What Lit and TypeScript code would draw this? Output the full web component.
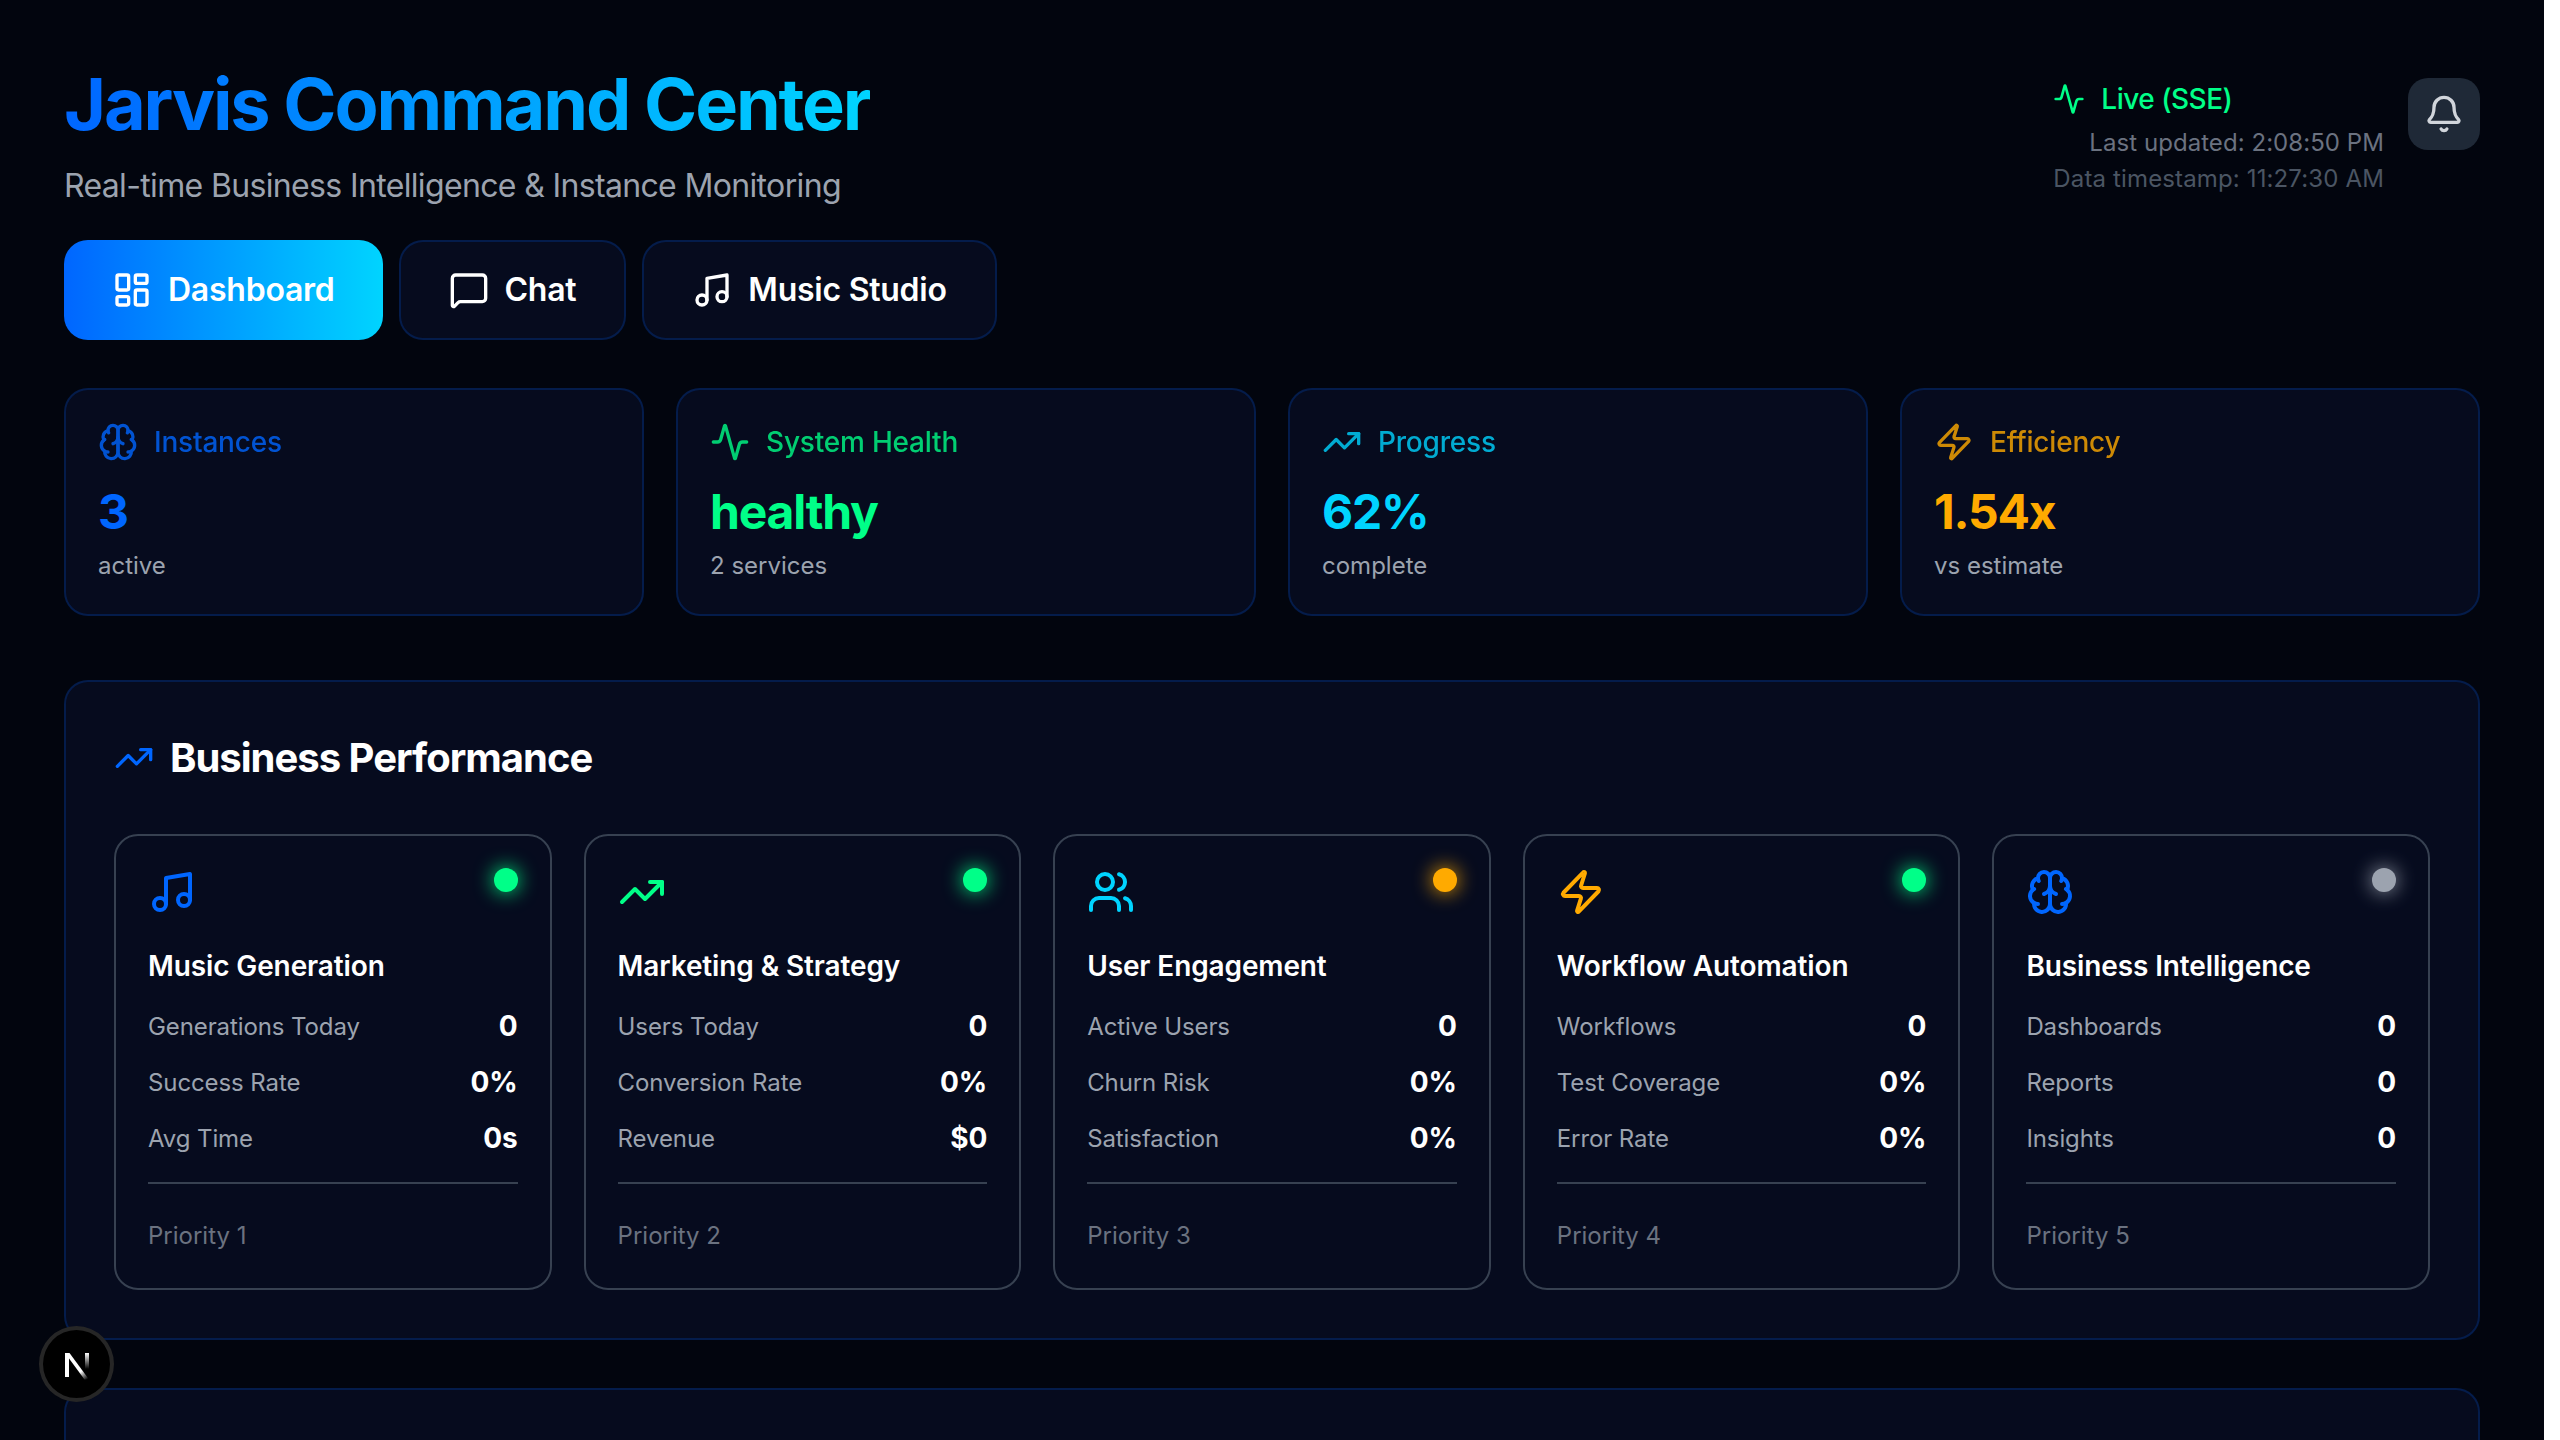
import { LitElement, html, css, svg } from 'lit';
import { customElement } from 'lit/decorators.js';

// Lucide icon bodies, all on a 24x24 grid
const icons = {
  activity: svg`<path d="M22 12h-2.48a2 2 0 0 0-1.93 1.46l-2.35 8.36a.25.25 0 0 1-.48 0L9.24 2.18a.25.25 0 0 0-.48 0l-2.35 8.36A2 2 0 0 1 4.49 12H2"/>`,
  bell: svg`<path d="M10.268 21a2 2 0 0 0 3.464 0"/><path d="M3.262 15.326A1 1 0 0 0 4 17h16a1 1 0 0 0 .74-1.673C19.41 13.956 18 12.499 18 8A6 6 0 0 0 6 8c0 4.499-1.411 5.956-2.738 7.326"/>`,
  dashboard: svg`<rect width="7" height="9" x="3" y="3" rx="1"/><rect width="7" height="5" x="14" y="3" rx="1"/><rect width="7" height="9" x="14" y="12" rx="1"/><rect width="7" height="5" x="3" y="16" rx="1"/>`,
  chat: svg`<path d="M22 17a2 2 0 0 1-2 2H6.828a2 2 0 0 0-1.414.586l-2.202 2.202A.71.71 0 0 1 2 21.286V5a2 2 0 0 1 2-2h16a2 2 0 0 1 2 2z"/>`,
  music: svg`<path d="M9 18V5l12-2v13"/><circle cx="6" cy="18" r="3"/><circle cx="18" cy="16" r="3"/>`,
  trending: svg`<path d="M16 7h6v6"/><path d="m22 7-8.5 8.5-5-5L2 17"/>`,
  users: svg`<path d="M16 21v-2a4 4 0 0 0-4-4H6a4 4 0 0 0-4 4v2"/><circle cx="9" cy="7" r="4"/><path d="M22 21v-2a4 4 0 0 0-3-3.87"/><path d="M16 3.13a4 4 0 0 1 0 7.75"/>`,
  zap: svg`<path d="M4 14a1 1 0 0 1-.78-1.63l9.9-10.2a.5.5 0 0 1 .86.46l-1.92 6.02A1 1 0 0 0 13 10h7a1 1 0 0 1 .78 1.63l-9.9 10.2a.5.5 0 0 1-.86-.46l1.92-6.02A1 1 0 0 0 11 14z"/>`,
  brain: svg`<path d="M12 5a3 3 0 1 0-5.997.125 4 4 0 0 0-2.526 5.77 4 4 0 0 0 .556 6.588A4 4 0 1 0 12 18Z"/><path d="M12 5a3 3 0 1 1 5.997.125 4 4 0 0 1 2.526 5.77 4 4 0 0 1-.556 6.588A4 4 0 1 1 12 18Z"/><path d="M15 13a4.5 4.5 0 0 1-3-4 4.5 4.5 0 0 1-3 4"/><path d="M17.599 6.5a3 3 0 0 0 .399-1.375"/><path d="M6.003 5.125A3 3 0 0 0 6.401 6.5"/><path d="M3.477 10.896a4 4 0 0 1 .585-.396"/><path d="M19.938 10.5a4 4 0 0 1 .585.396"/><path d="M6 18a4 4 0 0 1-1.967-.516"/><path d="M19.967 17.484A4 4 0 0 1 18 18"/>`,
};

type IconName = keyof typeof icons;
type Tone = 'blue' | 'green' | 'cyan' | 'amber' | 'grey';

const icon = (name: IconName, cls = '') => html`
  <svg class="icon ${cls}" viewBox="0 0 24 24" fill="none" stroke="currentColor" stroke-width="2"
    stroke-linecap="round" stroke-linejoin="round">${icons[name]}</svg>
`;

const tabs: { label: string; icon: IconName; active?: boolean }[] = [
  { label: 'Dashboard', icon: 'dashboard', active: true },
  { label: 'Chat', icon: 'chat' },
  { label: 'Music Studio', icon: 'music' },
];

const stats: { title: string; icon: IconName; tone: Tone; value: string; sub: string }[] = [
  { title: 'Instances', icon: 'brain', tone: 'blue', value: '3', sub: 'active' },
  { title: 'System Health', icon: 'activity', tone: 'green', value: 'healthy', sub: '2 services' },
  { title: 'Progress', icon: 'trending', tone: 'cyan', value: '62%', sub: 'complete' },
  { title: 'Efficiency', icon: 'zap', tone: 'amber', value: '1.54x', sub: 'vs estimate' },
];

const units: { title: string; icon: IconName; tone: Tone; dot: Tone; priority: number; rows: [string, string][] }[] = [
  { title: 'Music Generation', icon: 'music', tone: 'blue', dot: 'green', priority: 1,
    rows: [['Generations Today', '0'], ['Success Rate', '0%'], ['Avg Time', '0s']] },
  { title: 'Marketing & Strategy', icon: 'trending', tone: 'green', dot: 'green', priority: 2,
    rows: [['Users Today', '0'], ['Conversion Rate', '0%'], ['Revenue', '$0']] },
  { title: 'User Engagement', icon: 'users', tone: 'cyan', dot: 'amber', priority: 3,
    rows: [['Active Users', '0'], ['Churn Risk', '0%'], ['Satisfaction', '0%']] },
  { title: 'Workflow Automation', icon: 'zap', tone: 'amber', dot: 'green', priority: 4,
    rows: [['Workflows', '0'], ['Test Coverage', '0%'], ['Error Rate', '0%']] },
  { title: 'Business Intelligence', icon: 'brain', tone: 'blue', dot: 'grey', priority: 5,
    rows: [['Dashboards', '0'], ['Reports', '0'], ['Insights', '0']] },
];

@customElement('app-root')
export class AppRoot extends LitElement {
  static styles = css`
    :host {
      display: block;
      position: relative;
      width: 2544px;
      height: 1440px;
      overflow: hidden;
      background: #02050e;
      color: #fff;
      font-family: 'Inter', 'Liberation Sans', sans-serif;
    }

    .page {
      padding: 64px;
    }

    .blue { --tone: #0066ff; }
    .green { --tone: #00ff88; }
    .cyan { --tone: #00d4ff; }
    .amber { --tone: #ffaa00; }
    .grey { --tone: #9ca3af; }

    .icon {
      display: block;
      flex: none;
      width: 40px;
      height: 40px;
    }

    /* header */
    .header {
      display: flex;
      justify-content: space-between;
      align-items: flex-start;
      margin-bottom: 30px;
    }

    h1 {
      margin: 0 0 18px;
      width: fit-content;
      font-size: 72px;
      line-height: 80px;
      font-weight: 700;
      letter-spacing: -2.15px;
      background: linear-gradient(90deg, #0066ff, #00d4ff);
      -webkit-background-clip: text;
      background-clip: text;
      color: transparent;
    }

    .subtitle {
      font-size: 32px;
      line-height: 48px;
      letter-spacing: -0.65px;
      color: #9ca3af;
    }

    .header-right {
      display: flex;
      align-items: flex-start;
      gap: 24px;
      padding-top: 14px;
    }

    .status {
      display: flex;
      flex-direction: column;
      text-align: right;
      padding-top: 1px;
    }

    .live {
      display: flex;
      align-items: center;
      gap: 16px;
      margin-bottom: 6px;
      font-size: 28px;
      line-height: 40px;
      font-weight: 500;
      letter-spacing: -0.5px;
      color: #00ff88;
    }

    .live .icon {
      width: 32px;
      height: 32px;
    }

    .updated,
    .stamp {
      font-size: 24px;
      line-height: 36px;
    }

    .updated { color: #6b7280; letter-spacing: 0.06px; }
    .stamp { color: #4b5563; letter-spacing: 0.14px; }

    .bell {
      display: flex;
      align-items: center;
      justify-content: center;
      width: 72px;
      height: 72px;
      border-radius: 20px;
      background: #1f2937;
      color: #d1d5db;
    }

    /* tabs */
    .tabs {
      display: flex;
      gap: 16px;
      margin-bottom: 48px;
    }

    .tab {
      display: flex;
      align-items: center;
      gap: 16px;
      padding: 24px 48px;
      border: 2px solid rgba(0, 102, 255, 0.2);
      border-radius: 24px;
      background: #060b1e;
      font-size: 32px;
      line-height: 48px;
      font-weight: 600;
      letter-spacing: -0.25px;
    }

    .tab.active {
      border: 0;
      background: linear-gradient(90deg, #0066ff, #00d4ff);
    }

    /* top stats */
    .stats {
      display: grid;
      grid-template-columns: repeat(4, 1fr);
      gap: 32px;
      margin-bottom: 64px;
    }

    .panel {
      border: 2px solid rgba(0, 102, 255, 0.2);
      border-radius: 24px;
      background: #060b1e;
    }

    .stat {
      padding: 32px;
    }

    .stat-title {
      display: flex;
      align-items: center;
      gap: 16px;
      height: 40px;
      margin-bottom: 18px;
      font-size: 28px;
      font-weight: 500;
      letter-spacing: -0.2px;
      color: var(--tone);
    }

    .stat-title > * {
      opacity: 0.8;
    }

    .stat-value {
      font-size: 48px;
      line-height: 64px;
      font-weight: 700;
      letter-spacing: -1.2px;
      color: var(--tone);
    }

    .stat-sub {
      margin-top: 6px;
      font-size: 24px;
      line-height: 32px;
      color: #9ca3af;
    }

    /* business performance */
    .section {
      padding: 48px;
      margin-bottom: 48px;
    }

    .section.next {
      height: 300px;
    }

    h2 {
      display: flex;
      align-items: center;
      gap: 16px;
      margin: 0 0 48px;
      font-size: 40px;
      line-height: 56px;
      font-weight: 700;
      letter-spacing: -1px;
    }

    h2 .icon {
      color: #0066ff;
    }

    .units {
      display: grid;
      grid-template-columns: repeat(5, 1fr);
      gap: 32px;
    }

    .unit {
      padding: 32px;
      border: 2px solid #374151;
      border-radius: 24px;
    }

    .unit-top {
      display: flex;
      justify-content: space-between;
      align-items: flex-start;
      margin-bottom: 26px;
    }

    .unit-top .icon {
      width: 48px;
      height: 48px;
      color: var(--tone);
    }

    .dot {
      width: 24px;
      height: 24px;
      border-radius: 50%;
      background: var(--tone);
      box-shadow: 0 0 20px var(--tone);
    }

    h3 {
      margin: 0 0 16px;
      font-size: 28px;
      line-height: 48px;
      font-weight: 600;
      letter-spacing: -0.12px;
    }

    .rows {
      display: flex;
      flex-direction: column;
      gap: 16px;
    }

    .row {
      display: flex;
      justify-content: space-between;
      align-items: center;
      height: 40px;
      font-size: 24px;
      letter-spacing: -0.1px;
      color: #9ca3af;
    }

    .row b {
      font-size: 28px;
      font-weight: 700;
      color: #fff;
    }

    .priority {
      margin-top: 24px;
      padding-top: 32px;
      border-top: 2px solid #374151;
      font-size: 24px;
      line-height: 40px;
      color: #6b7280;
    }

    /* dev tools badge */
    .badge {
      position: absolute;
      left: 39px;
      top: 1326px;
      display: flex;
      align-items: center;
      justify-content: center;
      box-sizing: border-box;
      width: 75px;
      height: 76px;
      border: 4px solid #262626;
      border-radius: 50%;
      background: #000;
    }
  `;

  render() {
    return html`
      <div class="page">
        <header class="header">
          <div>
            <h1>Jarvis Command Center</h1>
            <div class="subtitle">Real-time Business Intelligence &amp; Instance Monitoring</div>
          </div>
          <div class="header-right">
            <div class="status">
              <div class="live">${icon('activity')}<span>Live (SSE)</span></div>
              <div class="updated">Last updated: 2:08:50 PM</div>
              <div class="stamp">Data timestamp: 11:27:30 AM</div>
            </div>
            <div class="bell">${icon('bell')}</div>
          </div>
        </header>

        <nav class="tabs">
          ${tabs.map(t => html`
            <div class="tab ${t.active ? 'active' : ''}">${icon(t.icon)}<span>${t.label}</span></div>
          `)}
        </nav>

        <div class="stats">
          ${stats.map(s => html`
            <div class="panel stat ${s.tone}">
              <div class="stat-title">${icon(s.icon)}<span>${s.title}</span></div>
              <div class="stat-value">${s.value}</div>
              <div class="stat-sub">${s.sub}</div>
            </div>
          `)}
        </div>

        <section class="panel section">
          <h2>${icon('trending')}<span>Business Performance</span></h2>
          <div class="units">
            ${units.map(u => html`
              <div class="unit">
                <div class="unit-top">
                  <span class=${u.tone}>${icon(u.icon)}</span>
                  <span class="dot ${u.dot}"></span>
                </div>
                <h3>${u.title}</h3>
                <div class="rows">
                  ${u.rows.map(([label, value]) => html`
                    <div class="row"><span>${label}</span><b>${value}</b></div>
                  `)}
                </div>
                <div class="priority">Priority ${u.priority}</div>
              </div>
            `)}
          </div>
        </section>

        <section class="panel section next"></section>
      </div>

      <div class="badge">
        <svg width="36" height="36" viewBox="0 0 36 36">
          <defs>
            <linearGradient id="n-diag" x1="14" y1="12" x2="30" y2="32" gradientUnits="userSpaceOnUse">
              <stop offset="0.6" stop-color="#fff"/>
              <stop offset="1" stop-color="#fff" stop-opacity="0"/>
            </linearGradient>
            <linearGradient id="n-stem" x1="28" y1="7" x2="28" y2="23" gradientUnits="userSpaceOnUse">
              <stop offset="0" stop-color="#fff"/>
              <stop offset="1" stop-color="#fff" stop-opacity="0"/>
            </linearGradient>
          </defs>
          <path d="M6 7h4v24H6z" fill="#fff"/>
          <path d="M6 7h4.5L30 33.5h-4.5z" fill="url(#n-diag)"/>
          <path d="M26 7h4v17h-4z" fill="url(#n-stem)"/>
        </svg>
      </div>
    `;
  }
}
